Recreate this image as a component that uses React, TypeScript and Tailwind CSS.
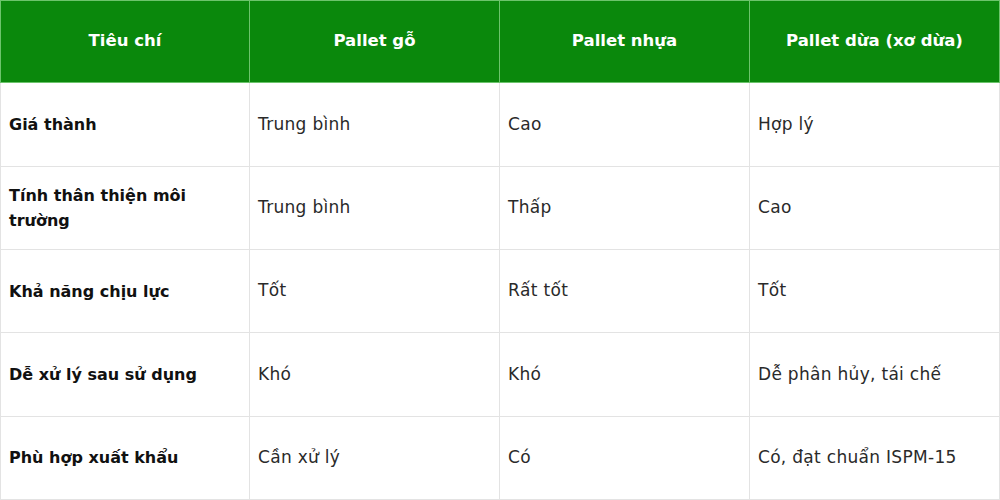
import React from "react";

const header = ["Tiêu chí", "Pallet gỗ", "Pallet nhựa", "Pallet dừa (xơ dừa)"];
const rows: [React.ReactNode, string, string, string][] = [
  ["Giá thành", "Trung bình", "Cao", "Hợp lý"],
  [
    <>
      Tính thân thiện môi
      <br />
      trường
    </>,
    "Trung bình",
    "Thấp",
    "Cao",
  ],
  ["Khả năng chịu lực", "Tốt", "Rất tốt", "Tốt"],
  ["Dễ xử lý sau sử dụng", "Khó", "Khó", "Dễ phân hủy, tái chế"],
  ["Phù hợp xuất khẩu", "Cần xử lý", "Có", "Có, đạt chuẩn ISPM-15"],
];

export default function App() {
  return (
    <div
      className="w-[1000px] h-[500px] bg-white grid grid-cols-4 grid-rows-6 overflow-hidden"
      style={{ fontFamily: '"DejaVu Sans", "Noto Sans", sans-serif' }}
    >
      {header.map((h, i) => (
        <div
          key={h}
          className={`bg-[#0a880c] text-white font-bold text-[16.5px] flex items-center justify-center border-b border-t border-r border-[#6cc46c] ${
            i === 0 ? "border-l" : ""
          }`}
        >
          {h}
        </div>
      ))}
      {rows.map((r, ri) =>
        r.map((c, ci) => (
          <div
            key={`${ri}-${ci}`}
            className={`flex items-center px-2 border-r border-b border-[#e3e3e3] ${
              ci === 0
                ? "border-l font-bold text-[#111] text-[16px] leading-[25px]"
                : "text-[#2a2a2a] text-[17px] tracking-[0.3px]"
            }`}
          >
            <div>{c}</div>
          </div>
        ))
      )}
    </div>
  );
}
